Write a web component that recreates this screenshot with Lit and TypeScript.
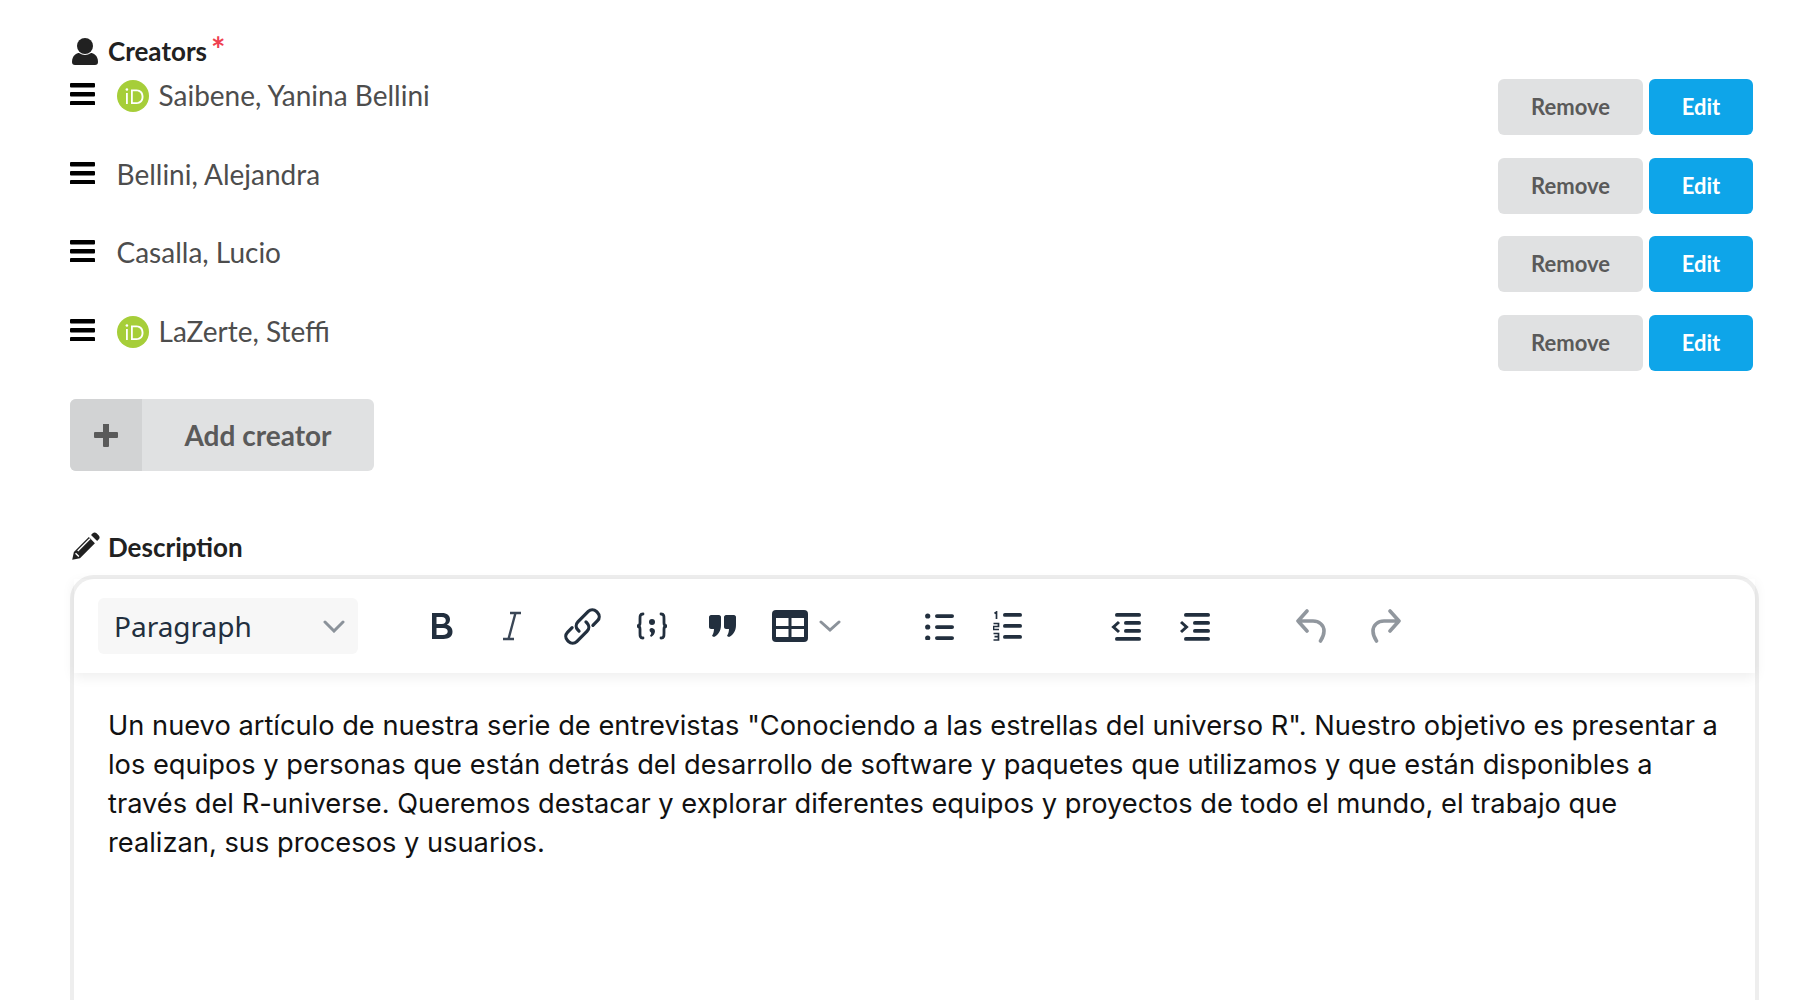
import { LitElement, html, css } from "lit";
import { customElement } from "lit/decorators.js";

const rows = [
  { name: "Saibene, Yanina Bellini", orcid: true },
  { name: "Bellini, Alejandra", orcid: false },
  { name: "Casalla, Lucio", orcid: false },
  { name: "LaZerte, Steffi", orcid: true },
];

@customElement("app-root")
export class AppRoot extends LitElement {
  static styles = css`
    :host { display: block; height: 1000px; overflow: hidden; background: #fff; font-family: Lato, sans-serif; }
    .page { padding: 34px 35px 0 70px; }
    .label { display: flex; align-items: center; gap: 10px; font-weight: 700; font-size: 26px; line-height: 34px; color: #212121; }
    .pen { margin-right: -3px; }
    .req { color: #ef4050; font-size: 34px; font-weight: 700; align-self: flex-start; line-height: 30px; height: 20px; margin-left: -6px; }
    .rows { margin-right: 6px; margin-top: 11px; }
    .row { display: flex; align-items: flex-start; height: 78.7px; }
    .handle { width: 25px; margin-top: 4px; margin-right: 22px; flex: none; height: 22px; }
    .name { flex: 1; display: flex; align-items: center; gap: 10px; font-size: 28px; line-height: 34px; color: #4d4d4d; height: 34px; margin-top: -1px; }
    .name span { margin-left: -0.5px; }
    .orcid { flex: none; margin-top: 1px; }
    .btn { height: 56px; box-sizing: border-box; padding-bottom: 1px; display: flex; align-items: center; justify-content: center; border-radius: 6px; font-size: 22px; font-weight: 700; }
    .remove { width: 145px; background: #e0e1e2; color: #5a5a5a; margin-right: 6px; }
    .edit { width: 104px; background: #0ea5e9; color: #fff; }
    .add { display: flex; width: 304px; height: 72px; margin-top: 5px; background: #e0e1e2; border-radius: 6px; overflow: hidden; color: #5a5a5a; font-weight: 700; font-size: 28px; }
    .add .ic { width: 72px; background: #d2d3d4; display: flex; align-items: center; justify-content: center; }
    .add .t { flex: 1; display: flex; align-items: center; justify-content: center; }
    .desc { margin-top: 59px; }
    .editor { margin-top: 11px; height: 500px; border: 4px solid #eee; border-bottom: none; border-radius: 24px 24px 0 0; }
    .toolbar { height: 94px; box-sizing: border-box; padding: 1px 0 0 24px; display: flex; align-items: center; box-shadow: 0 4px 12px rgba(0,0,0,.07); position: relative; color: #222f3e; }
    .select { width: 260px; height: 56px; flex: none; box-sizing: border-box; background: #f7f7f7; border-radius: 6px; display: flex; align-items: center; justify-content: space-between; padding: 0 12px 0 16px; font-family: "Noto Sans", sans-serif; font-size: 28px; color: #222f3e; }
    .tools { display: flex; align-items: center; margin-left: 64px; }
    .tool { display: flex; align-items: center; justify-content: center; flex: none; width: 40px; height: 40px; margin-right: 30px; }
    .table { width: auto; margin-right: 0; }
    .caret { margin-left: 11px; }
    .bul { margin-left: 78px; margin-right: 28.5px; }
    .num { margin-right: 0; }
    .out { margin-left: 78.5px; margin-right: 29px; }
    .ind { margin-right: 0; }
    .undo { margin-left: 76px; margin-right: 34px; }
    .content { padding: 33px 30px 0 34px; font-family: Inter, sans-serif; font-size: 27.26px; line-height: 39.2px; color: #111; }
  `;

  render() {
    return html`<div class="page">
      <div class="label">
        <svg width="28" height="28" viewBox="-1 0 28 28"><circle cx="14" cy="9" r="8" fill="#212121"/><path d="M1 25c0-7 5-9 7-9 2 1 4 2 6 2s4-1 6-2c2 0 7 2 7 9 0 2-1 3-3 3H4c-2 0-3-1-3-3z" fill="#212121"/></svg>
        <span>Creators</span><span class="req">*</span>
      </div>
      <div class="rows">
        ${rows.map((r) => html`<div class="row">
          <svg class="handle" viewBox="0 0 25 22"><rect y="0" width="25" height="4.4" rx="1" fill="#000"/><rect y="9" width="25" height="4.4" rx="1" fill="#000"/><rect y="18" width="25" height="4.4" rx="1" fill="#000"/></svg>
          <div class="name">
            ${r.orcid ? html`<svg class="orcid" width="32" height="32" viewBox="0 0 32 32"><circle cx="16" cy="16" r="16" fill="#a6ce39"/><rect x="9" y="13" width="1.800" height="11" fill="#fff"/><circle cx="9.900" cy="9.500" r="1.300" fill="#fff"/><path d="M14 9.500h5.500c4.600 0 7 3 7 7.250S24 24 19.500 24H14zm1.800 1.700v11.100h3.500c3.500 0 5.300-2.300 5.300-5.500s-1.800-5.600-5.300-5.600z" fill="#fff"/></svg>` : ""}
            <span>${r.name}</span>
          </div>
          <div class="btn remove">Remove</div>
          <div class="btn edit">Edit</div>
        </div>`)}
      </div>
      <div class="add">
        <div class="ic"><svg width="26" height="26" viewBox="0 0 26 26"><path d="M10 2h6v8h8a1 1 0 0 1 1 1v4a1 1 0 0 1-1 1h-8v8a1 1 0 0 1-1 1h-4a1 1 0 0 1-1-1v-8H2a1 1 0 0 1-1-1v-4a1 1 0 0 1 1-1h8V3z" fill="#5a5a5a"/></svg></div>
        <div class="t">Add creator</div>
      </div>
      <div class="label desc">
        <svg class="pen" width="31" height="31" viewBox="0 0 28 28"><path d="M2 26l1.500-7L17 5.500l5.500 5.500L9 24.500zM19 3.500l1.500-1.500c1-1 2.500-1 3.500 0l2 2c1 1 1 2.500 0 3.500L24.500 9z" fill="#212121"/><path d="M5 20l3 3M7 18L18 7" stroke="#fff" stroke-width="1.300"/></svg>
        <span>Description</span>
      </div>
      <div class="editor">
        <div class="toolbar">
          <div class="select"><span>Paragraph</span><svg width="24" height="14" viewBox="0 0 24 14"><path d="M3 3l9 9 9-9" fill="none" stroke="#8b929a" stroke-width="3" stroke-linecap="round"/></svg></div>
          <div class="tools">
            <div class="tool"><svg width="22" height="28" viewBox="0 0 22 28"><path d="M1 1h10c5 0 8 2.500 8 6.500 0 2.500-1.200 4.300-3.300 5.300 3.300.8 5.800 3 5.800 7 0 5-3.800 7.200-9 7.200H1zm4.500 4v7h5.300c2.700 0 4-1.300 4-3.500S13.500 5 10.800 5zm0 11v7h6.300c3 0 4.900-1.200 4.900-3.500S15.100 16 12.100 16z" fill="#222f3e"/></svg></div>
            <div class="tool"><svg width="20" height="30" viewBox="0 0 20 30"><path d="M8 2h11M1 28h11M13.500 2L6.500 28" fill="none" stroke="#3a4656" stroke-width="2.400"/></svg></div>
            <div class="tool"><svg width="37" height="37" viewBox="2 2 32 32"><g fill="none" stroke="#222f3e" stroke-width="2.800" stroke-linecap="round"><path d="M15 22l-1-1a5 5 0 0 1 0-7l9-9a5 5 0 0 1 7 0l1 1a5 5 0 0 1 0 7l-4 4"/><path d="M21 14l1 1a5 5 0 0 1 0 7l-9 9a5 5 0 0 1-7 0l-1-1a5 5 0 0 1 0-7l4-4"/></g></svg></div>
            <div class="tool"><svg width="34" height="28" viewBox="0 0 34 28"><g fill="none" stroke="#222f3e" stroke-width="2.800" stroke-linecap="round"><path d="M8 2C5 2 5 4 5 7v4c0 2-1 3-3 3 2 0 3 1 3 3v4c0 3 0 5 3 5"/><path d="M26 2c3 0 3 2 3 5v4c0 2 1 3 3 3-2 0-3 1-3 3v4c0 3 0 5-3 5"/></g><circle cx="17" cy="10" r="3" fill="#222f3e"/><path d="M14.500 17.500a3 3 0 0 1 5.500 1.500c0 3-2 5-4 6l-1-1.500c1-1 1.500-2 1-3a3 3 0 0 1-1.500-3z" fill="#222f3e"/></svg></div>
            <div class="tool"><svg width="30" height="22" viewBox="0 0 30 22"><path d="M2 2c0-1 1-2 2-2h8c1 0 2 1 2 2v8c0 6-3 10-7 12l-2-1c1-2 2-4 2-7H4c-1 0-2-1-2-2zM17 2c0-1 1-2 2-2h8c1 0 2 1 2 2v8c0 6-3 10-7 12l-2-1c1-2 2-4 2-7h-3c-1 0-2-1-2-2z" fill="#222f3e"/></svg></div>
            <div class="tool table"><svg width="36" height="32" viewBox="0 0 36 32"><rect width="36" height="32" rx="4" fill="#222f3e"/><rect x="4" y="8" width="12.500" height="8" fill="#fff"/><rect x="19.500" y="8" width="12.500" height="8" fill="#fff"/><rect x="4" y="19" width="12.500" height="8" fill="#fff"/><rect x="19.500" y="19" width="12.500" height="8" fill="#fff"/></svg><svg class="caret" width="22" height="14" viewBox="0 0 22 14"><path d="M2 3l9 8 9-8" fill="none" stroke="#8b929a" stroke-width="3" stroke-linecap="round"/></svg></div>
            <div class="tool bul"><svg width="29" height="27" viewBox="0 0 29 27"><g fill="#222f3e"><circle cx="2.700" cy="3" r="2.600"/><circle cx="2.700" cy="14" r="2.600"/><circle cx="2.700" cy="25" r="2.600"/><rect x="10" y="1.200" width="19" height="3.800" rx="1.900"/><rect x="10" y="12.200" width="19" height="3.800" rx="1.900"/><rect x="10" y="23.200" width="19" height="3.800" rx="1.900"/></g></svg></div>
            <div class="tool num"><svg width="29" height="30" viewBox="0 0 29 30"><g fill="#222f3e"><rect x="10" y="2" width="19" height="3.800" rx="1.900"/><rect x="10" y="13" width="19" height="3.800" rx="1.900"/><rect x="10" y="24" width="19" height="3.800" rx="1.900"/></g><g fill="none" stroke="#222f3e" stroke-width="1.700"><path d="M1.500 2.500L3.500 1v7"/><path d="M.5 12.500h5v3h-5v3h5.500"/><path d="M.5 22.500h5v6.500h-5M1.500 25.700h4"/></g></svg></div>
            <div class="tool out"><svg width="30" height="29" viewBox="0 0 30 29"><g fill="#222f3e"><rect x="4" y="1" width="26" height="3.800" rx="1.900"/><rect x="13" y="9" width="17" height="3.800" rx="1.900"/><rect x="13" y="17" width="17" height="3.800" rx="1.900"/><rect x="4" y="25" width="26" height="3.800" rx="1.900"/></g><path d="M8 10l-5.500 5 5.500 5" fill="none" stroke="#222f3e" stroke-width="3"/></svg></div>
            <div class="tool ind"><svg width="30" height="29" viewBox="0 0 30 29"><g fill="#222f3e"><rect x="4" y="1" width="26" height="3.800" rx="1.900"/><rect x="13" y="9" width="17" height="3.800" rx="1.900"/><rect x="13" y="17" width="17" height="3.800" rx="1.900"/><rect x="4" y="25" width="26" height="3.800" rx="1.900"/></g><path d="M1 10l5.500 5L1 20" fill="none" stroke="#222f3e" stroke-width="3"/></svg></div>
            <div class="tool undo"><svg width="31" height="34" viewBox="0 0 31 34"><path d="M11 2L2 12l9 10M2 12h15c6 0 11 4 11 10 0 4-1.500 7-3.500 10" fill="none" stroke="#91979e" stroke-width="3.600" stroke-linecap="round" stroke-linejoin="round"/></svg></div>
            <div class="tool"><svg width="31" height="34" viewBox="0 0 31 34"><path d="M20 2l9 10-9 10M29 12H14C8 12 3 16 3 22c0 4 1.500 7 3.500 10" fill="none" stroke="#91979e" stroke-width="3.600" stroke-linecap="round" stroke-linejoin="round"/></svg></div>
          </div>
        </div>
        <div class="content">Un nuevo artículo de nuestra serie de entrevistas "Conociendo a las estrellas del universo R". Nuestro objetivo es presentar a los equipos y personas que están detrás del desarrollo de software y paquetes que utilizamos y que están disponibles a través del R-universe. Queremos destacar y explorar diferentes equipos y proyectos de todo el mundo, el trabajo que realizan, sus procesos y usuarios.</div>
      </div>
    </div>`;
  }
}
